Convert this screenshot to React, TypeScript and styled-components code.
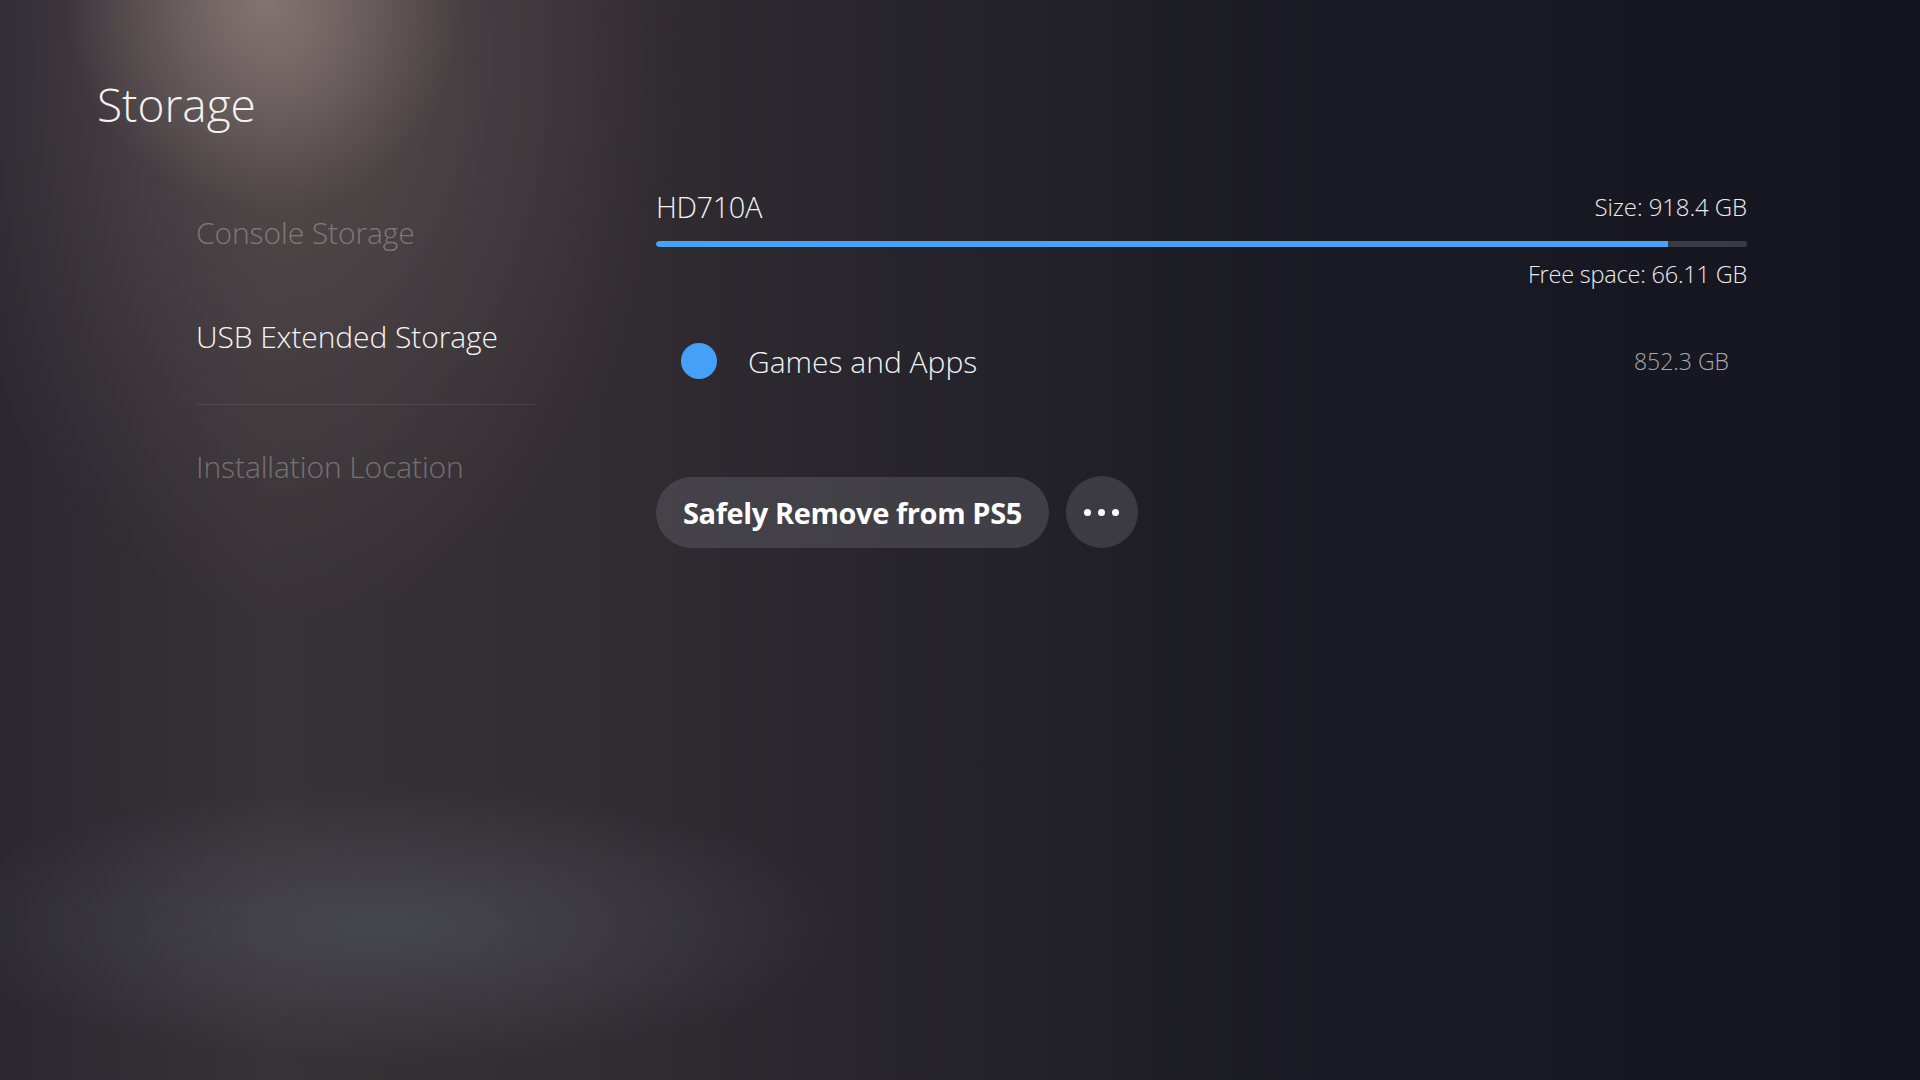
import styled, { createGlobalStyle } from 'styled-components';

const GlobalStyle = createGlobalStyle`
  html, body {
    margin: 0;
    padding: 0;
    background: #16171f;
  }
  * {
    box-sizing: border-box;
  }
`;

const menuItems = [
  { label: 'Console Storage', active: false },
  { label: 'USB Extended Storage', active: true },
  { label: 'Installation Location', active: false, divided: true },
];

export default function App() {
  const total = 918.4;
  const used = 852.3;

  return (
    <>
      <GlobalStyle />
      <Screen>
        <Title>Storage</Title>
        <Body>
          <SideMenu>
            {menuItems.map((item) => (
              <MenuItem key={item.label} $active={item.active} $divided={item.divided}>
                {item.label}
              </MenuItem>
            ))}
          </SideMenu>

          <Panel>
            <DriveHeader>
              <DriveName>HD710A</DriveName>
              <Meta>Size: 918.4 GB</Meta>
            </DriveHeader>
            <Track>
              <Fill style={{ width: `${(used / total) * 100}%` }} />
            </Track>
            <FreeSpace>Free space: 66.11 GB</FreeSpace>

            <UsageRow>
              <Dot />
              <UsageLabel>Games and Apps</UsageLabel>
              <UsageValue>852.3 GB</UsageValue>
            </UsageRow>

            <Actions>
              <PillButton>Safely Remove from PS5</PillButton>
              <MoreButton aria-label="More">
                <span />
                <span />
                <span />
              </MoreButton>
            </Actions>
          </Panel>
        </Body>
      </Screen>
    </>
  );
}

const Screen = styled.div`
  width: 1920px;
  height: 1080px;
  overflow: hidden;
  font-family: 'Open Sans', 'Liberation Sans', sans-serif;
  color: #f2f2f2;
  background:
    radial-gradient(ellipse 200px 210px at 265px 0px, rgba(165, 145, 140, 0.6), rgba(165, 145, 140, 0) 100%),
    radial-gradient(ellipse 380px 560px at 300px 60px, rgba(125, 108, 106, 0.45), rgba(125, 108, 106, 0) 100%),
    radial-gradient(ellipse 460px 140px at 390px 925px, rgba(92, 98, 110, 0.45), rgba(92, 98, 110, 0) 100%),
    linear-gradient(90deg, #2b2830 0%, #373236 14%, #322d32 30%, #25232b 50%, #1a1a24 70%, #14151e 100%);
`;

const Title = styled.h1`
  margin: 0;
  padding: 76px 0 0 97px;
  font-size: 46px;
  font-weight: 300;
  line-height: 56px;
`;

const Body = styled.div`
  display: grid;
  grid-template-columns: 340px 1091px;
  column-gap: 120px;
  padding: 34px 0 0 196px;
`;

const SideMenu = styled.nav`
  display: flex;
  flex-direction: column;
  padding-top: 14px;
`;

const MenuItem = styled.div<{ $active?: boolean; $divided?: boolean }>`
  height: 104px;
  display: flex;
  align-items: center;
  font-size: 30px;
  font-weight: 300;
  letter-spacing: -0.1px;
  color: ${(p) => (p.$active ? '#f4f4f4' : 'rgba(255, 255, 255, 0.3)')};
  ${(p) =>
    p.$divided &&
    `
    margin-top: 16px;
    border-top: 1px solid rgba(255, 255, 255, 0.08);
    height: 124px;
  `}
`;

const Panel = styled.section`
  display: flex;
  flex-direction: column;
  padding-top: 20px;
`;

const DriveHeader = styled.div`
  display: flex;
  justify-content: space-between;
  align-items: center;
  height: 40px;
`;

const DriveName = styled.div`
  font-size: 29px;
  font-weight: 300;
  letter-spacing: -0.4px;
`;

const Meta = styled.div`
  font-size: 24px;
  font-weight: 300;
  letter-spacing: -0.1px;
  color: #ececec;
`;

const Track = styled.div`
  margin-top: 15px;
  height: 6px;
  border-radius: 3px;
  background: #3a3a44;
  overflow: hidden;
`;

const Fill = styled.div`
  height: 100%;
  background: #47a1f7;
  border-radius: 3px 0 0 3px;
`;

const FreeSpace = styled(Meta)`
  align-self: flex-end;
  margin-top: 9px;
  line-height: 36px;
  font-size: 23.5px;
  letter-spacing: -0.2px;
`;

const UsageRow = styled.div`
  display: flex;
  align-items: center;
  height: 72px;
  margin-top: 33px;
  padding: 0 18px 0 25px;
`;

const Dot = styled.span`
  width: 36px;
  height: 36px;
  border-radius: 50%;
  background: #46a0f8;
  flex-shrink: 0;
`;

const UsageLabel = styled.span`
  margin-left: 31px;
  flex: 1;
  font-size: 30px;
  font-weight: 300;
`;

const UsageValue = styled.span`
  font-size: 23px;
  font-weight: 300;
  color: #a9a9ae;
`;

const Actions = styled.div`
  display: flex;
  align-items: center;
  gap: 17px;
  margin-top: 79px;
`;

const PillButton = styled.button`
  height: 71px;
  padding: 0 27px;
  border: none;
  border-radius: 36px;
  background: rgba(88, 86, 92, 0.55);
  color: #ffffff;
  font-family: 'Open Sans', 'Liberation Sans', sans-serif;
  font-size: 29px;
  font-weight: 700;
  letter-spacing: -0.4px;
`;

const MoreButton = styled.button`
  width: 72px;
  height: 72px;
  border: none;
  border-radius: 50%;
  background: rgba(88, 86, 92, 0.5);
  display: flex;
  align-items: center;
  justify-content: center;
  gap: 7px;

  span {
    width: 7px;
    height: 7px;
    border-radius: 50%;
    background: #ffffff;
  }
`;
